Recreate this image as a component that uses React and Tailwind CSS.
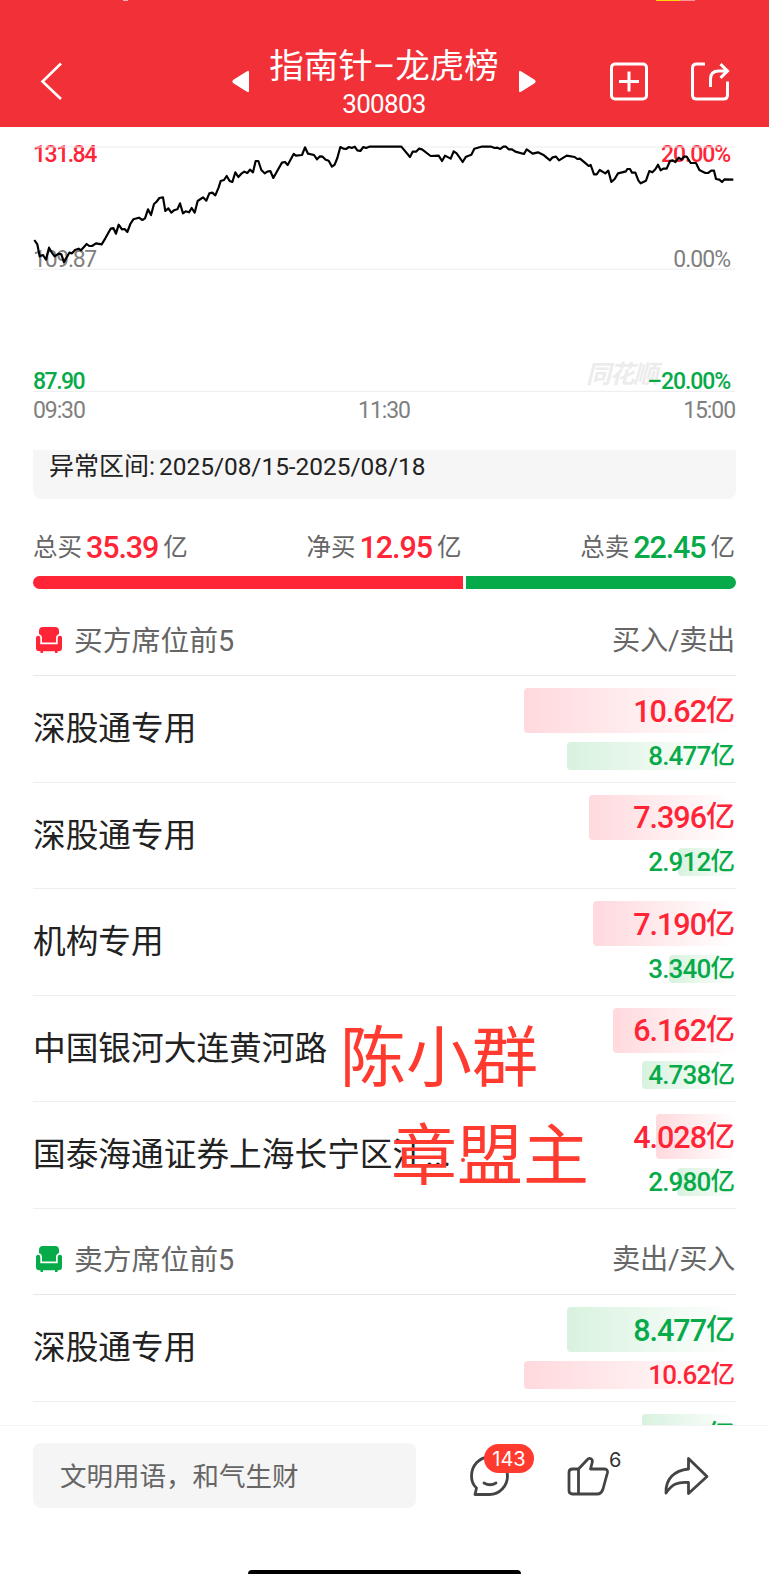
const F = "font-['Roboto','Noto_Sans_CJK_SC',sans-serif]";

const PRICE = "43,330 52,343 59,379 69,375 78,389 87,353 95,367 104,379 116,371 124,373 132,397 148,368 156,370 165,360 176,356 183,361 200,342 208,348 216,348 228,340 245,343 256,325 272,296 280,294 288,311 296,284 306,298 314,297 322,306 331,282 340,268 357,263 367,270 375,265 384,238 393,255 402,222 410,215 418,204 429,202 436,243 445,235 454,248 462,241 472,238 480,220 489,250 497,244 507,247 515,234 524,248 533,213 549,202 559,212 568,190 577,188 586,196 596,172 602,153 612,150 620,138 629,153 637,156 646,127 655,141 664,131 673,125 682,129 690,119 699,127 707,93 715,93 724,120 734,130 742,125 751,123 760,144 775,117 786,98 795,96 803,105 821,72 828,77 846,75 855,52 864,71 882,75 891,88 900,79 908,80 917,89 926,92 936,110 944,104 952,84 961,51 970,56 978,57 987,51 995,54 1004,50 1012,61 1021,63 1030,51 1038,54 1048,50 1144,50 1170,81 1178,65 1188,65 1197,56 1206,58 1232,78 1256,77 1266,93 1275,77 1292,86 1301,64 1310,70 1328,96 1338,80 1354,74 1363,56 1384,50 1414,50 1424,54 1432,53 1441,57 1450,50 1458,50 1466,58 1476,58 1486,65 1512,72 1520,58 1538,71 1554,67 1572,76 1590,91 1598,82 1608,80 1617,91 1640,77 1664,81 1672,87 1680,86 1698,101 1706,108 1712,105 1722,133 1730,133 1739,120 1756,130 1765,122 1774,156 1784,147 1794,130 1818,124 1822,117 1830,117 1836,128 1846,128 1855,151 1862,160 1878,152 1888,123 1897,127 1906,118 1914,104 1922,121 1930,116 1940,116 1950,93 1958,91 1966,96 1976,83 1984,89 1992,80 2000,80 2012,99 2028,99 2038,120 2056,129 2064,129 2074,122 2082,122 2088,147 2098,149 2106,156 2114,148 2140,149";

const BUYERS = [
  { name: "深股通专用", top: "10.62", bottom: "8.477" },
  { name: "深股通专用", top: "7.396", bottom: "2.912" },
  { name: "机构专用", top: "7.190", bottom: "3.340" },
  { name: "中国银河大连黄河路", top: "6.162", bottom: "4.738" },
  { name: "国泰海通证券上海长宁区江...", top: "4.028", bottom: "2.980" },
];

const SELLERS = [
  { name: "深股通专用", top: "8.477", bottom: "10.62" },
  { name: "中国银河大连黄河路", top: "4.738", bottom: "6.162" },
];

function Amount({ value, green, small }) {
  return (
    <div
      className={`flex items-center justify-end rounded-[4px] bg-linear-to-r ${small ? "h-[28px]" : "h-[45px]"} ${
        green ? "from-[#d8f2df] to-white text-[#07aa49]" : "from-[#ffd9dd] to-white text-[#ff2436]"
      }`}
      style={{ width: `${Number(value) * 19.92}px` }}
    >
      <span className={`flex shrink-0 items-center whitespace-nowrap pr-[1px] font-medium ${small ? "text-[26px] leading-[28px] tracking-[-0.8px]" : "pt-[1px] text-[30.500px] leading-[45px] tracking-[-1px]"}`}>
        {value}
        <span className={small ? "text-[24.5px] tracking-normal" : "text-[29px] tracking-normal"}>亿</span>
      </span>
    </div>
  );
}

function SeatRow({ seat, sell }) {
  return (
    <div className="flex h-[106.5px] shrink-0 items-center justify-between border-b border-[#efefef]">
      <span className="whitespace-nowrap pt-[1px] text-[32.700px] leading-[48px] text-[#222]">{seat.name}</span>
      <div className="flex w-0 flex-col items-end gap-[8.5px]">
        <Amount value={seat.top} green={sell} />
        <Amount value={seat.bottom} green={!sell} small />
      </div>
    </div>
  );
}

function SeatIcon({ className }) {
  return (
    <svg className={className} viewBox="0 0 26 26" width="26" height="26" fill="currentColor">
      <path d="M7 0h12q4 0 4 4v3q-3 1-3 4V15.500H6V11q0-3-3-4V4q0-4 4-4z" />
      <path d="M2 8.700Q4.300 8.700 4.300 11.500v5.700h17.400V11.500q0-2.800 2.300-2.800T26 11.500v9.500q0 3.300-3.500 3.300H21.500V26h-2.500v-1.700H7V26H4.500v-1.700H3.500Q0 24.300 0 21v-9.500q0-2.800 2-2.800z" />
    </svg>
  );
}

function SectionHead({ title, right, color }) {
  return (
    <div className="flex h-[72px] shrink-0 items-center justify-between border-b border-[#e8e8e8] pt-[3px] text-[28.800px] leading-[40px] text-[#666]">
      <div className="flex items-center gap-[12px] pl-[3px]">
        <SeatIcon className={`${color} mb-[3px]`} />
        <span>{title}</span>
      </div>
      <span className="pr-[1px] text-[28.200px] tracking-[-0.3px]">{right}</span>
    </div>
  );
}

function Total({ label, value, color }) {
  return (
    <div className="flex items-center text-[24.500px] text-[#666]">
      <span>{label}</span>
      <span className={`ml-[4px] mr-[5px] text-[30.500px] font-medium leading-[30px] tracking-[-1.1px] ${color}`}>{value}</span>
      <span>亿</span>
    </div>
  );
}

function Header() {
  return (
    <header className="relative flex h-[127px] shrink-0 items-start justify-between bg-[#f23037] text-white">
      <svg className="ml-[39px] mt-[62px]" width="26" height="38" viewBox="0 0 26 38" fill="none" stroke="currentColor" strokeWidth="2.600">
        <path d="M22 1.500L3.500 19.500L22 37" />
      </svg>
      <div className="absolute left-[231px] top-[44px] flex w-[306px] items-start justify-between">
        <svg className="mt-[26px]" width="19" height="23" viewBox="0 0 19 23" fill="currentColor">
          <path d="M16 1.300Q18 0 18 2.500v18Q18 23 16 21.700L2 13Q.5 11.500 2 10z" />
        </svg>
        <div className="flex flex-col items-center">
          <h1 className="whitespace-nowrap text-[34.500px] leading-[44px]">指南针–龙虎榜</h1>
          <div className="mt-[1px] text-[26px] leading-[30px] tracking-[-0.7px]">300803</div>
        </div>
        <svg className="mt-[26px]" width="19" height="23" viewBox="0 0 19 23" fill="currentColor">
          <path d="M3 1.300Q1 0 1 2.500v18Q1 23 3 21.700L17 13Q18.500 11.500 17 10z" />
        </svg>
      </div>
      <div className="mr-[39px] mt-[61px] flex gap-[41px]">
        <svg width="40" height="40" viewBox="0 0 40 40" fill="none" stroke="currentColor" strokeWidth="3">
          <rect x="2.500" y="3" width="35" height="35" rx="3.500" />
          <path d="M20 10.500v20M10 20.500h20" />
        </svg>
        <svg width="40" height="40" viewBox="0 0 40 40" fill="none" stroke="currentColor" strokeWidth="3">
          <path d="M15 3H6.500q-4 0-4 4v27q0 4 4 4h27q4 0 4-4V20.500" />
          <path d="M20.500 26V18q0-8 8-8H37M30.500 3.200L37.500 10L30.500 16.800" />
        </svg>
      </div>
      <div className="absolute left-[123px] top-0 h-px w-[5px] bg-white/60" />
      <div className="absolute left-[656px] top-0 flex h-px w-[39px]">
        <span className="w-[24px] bg-[#ffd60a]" />
        <span className="w-[15px] bg-white/50" />
      </div>
    </header>
  );
}

function Chart() {
  return (
    <section className="relative h-[323px] shrink-0 text-[23px] leading-[24px] tracking-[-1.3px]">
      <span className="absolute right-[112px] top-[236px] text-[25px] font-bold italic text-[#ececec]">同花顺</span>
      <span className="absolute left-[33px] top-[16px] font-medium tracking-[-1.5px] text-[#ff2436]">131.84</span>
      <span className="absolute left-[33px] top-[121px] text-[#808080]">109.87</span>
      <span className="absolute left-[33px] top-[243px] font-medium tracking-[-1.5px] text-[#07aa49]">87.90</span>
      <span className="absolute right-[39px] top-[16px] font-medium tracking-[-1.1px] text-[#ff2436]">20.00%</span>
      <span className="absolute right-[39px] top-[121px] tracking-[-1px] text-[#808080]">0.00%</span>
      <span className="absolute right-[39px] top-[243px] font-medium tracking-[-1.1px] text-[#07aa49]">–20.00%</span>
      <svg className="absolute left-[20px] top-[3px]" width="729" height="270" viewBox="0 0 2187 810" fill="none">
        <path d="M40 51H2145M40 417.500H2145M40 784H2145" stroke="#ececec" strokeWidth="3" />
        <polyline points={PRICE} stroke="#000" strokeWidth="6.500" strokeLinejoin="round" />
      </svg>
      <div className="absolute left-[33px] top-[272px] flex w-[702px] justify-between tracking-[-1.1px] text-[#808080]">
        <span>09:30</span>
        <span>11:30</span>
        <span>15:00</span>
      </div>
    </section>
  );
}

function Footer() {
  return (
    <footer className="flex h-[149px] shrink-0 flex-col justify-between border-t border-[#f3f3f3] bg-white">
      <div className="flex items-start pl-[33px] pt-[17px]">
        <div className="flex h-[65px] w-[383px] items-center rounded-[8px] bg-[#f5f5f5] pl-[27px] pt-[2px] text-[26.500px] text-[#666]">文明用语，和气生财</div>
        <div className="relative ml-[52px] mt-[11px] text-[#444]">
          <svg width="44" height="44" viewBox="0 0 44 44" fill="none" stroke="currentColor" strokeWidth="2.800" strokeLinejoin="round" strokeLinecap="round">
            <path d="M7 40.500L8.500 34C5 31 3.500 26.500 3.500 22C3.500 11.500 11.500 3 21.500 3C31.500 3 39.500 11.500 39.500 22C39.500 32 31.500 40.500 21.500 40.500Z" />
            <path d="M16 29q6 3.500 12 0" />
          </svg>
          <span className="absolute left-[16px] top-[-10px] flex h-[29px] w-[50px] items-center justify-center rounded-full bg-[#ff3b30] font-['Inter'] text-[20px] text-white">143</span>
        </div>
        <div className="relative ml-[54px] mt-[12px] text-[#444]">
          <svg width="44" height="44" viewBox="0 0 44 44" fill="none" stroke="currentColor" strokeWidth="2.800" strokeLinejoin="round">
            <path d="M12.500 14L21 5Q22.500 3 24.500 3.500Q27 4.500 26.200 7.500L24.500 14H38Q42 14 41.500 17.500L37 34Q35.500 39 31 39H6.500Q3 39 3 35.500V17.500Q3 14 6.500 14ZM12.500 14V39" />
          </svg>
          <span className="absolute left-[43px] top-[-8px] font-['Inter'] text-[20px] leading-[26px] text-[#333]">6</span>
        </div>
        <svg className="ml-[52px] mt-[12px] text-[#444]" width="48" height="44" viewBox="0 0 48 44" fill="none" stroke="currentColor" strokeWidth="2.800" strokeLinejoin="round">
          <path d="M26.500 3.500L45 21.500L26.500 38.500V27.500C16 26.500 10 29 4 38C3.500 24 12 15.500 26.500 14Z" />
        </svg>
      </div>
      <div className="ml-[248px] h-[4px] w-[273px] rounded-t-[4px] bg-black" />
    </footer>
  );
}

export default function App() {
  return (
    <div className={`flex h-[1574px] w-[769px] flex-col overflow-hidden bg-white ${F}`}>
      <Header />
      <main className="relative flex min-h-0 flex-1 flex-col overflow-hidden">
        <Chart />
        <div className="mx-[33px] flex h-[49px] shrink-0 items-start rounded-b-[8px] bg-[#f6f6f6] pl-[16px] pt-[2px] text-[25px] leading-[30px] text-[#222]">
          <span>异常区间:</span>
          <span className="ml-[4px] text-[24.400px]">2025/08/15-2025/08/18</span>
        </div>
        <div className="ml-[33px] mr-[34px] mt-[31px] flex h-[36px] shrink-0 items-center justify-between">
          <Total label="总买" value="35.39" color="text-[#ff2436]" />
          <Total label="净买" value="12.95" color="text-[#ff2436]" />
          <Total label="总卖" value="22.45" color="text-[#07aa49]" />
        </div>
        <div className="mx-[33px] mt-[10px] flex h-[13px] shrink-0 gap-[3px]">
          <div className="w-[430px] rounded-l-full bg-[#ff2436]" />
          <div className="flex-1 rounded-r-full bg-[#07aa49]" />
        </div>
        <div className="mx-[33px] mt-[15px] flex shrink-0 flex-col">
          <SectionHead title="买方席位前5" right="买入/卖出" color="text-[#ff2436]" />
          {BUYERS.map((s, i) => (
            <SeatRow key={i} seat={s} />
          ))}
        </div>
        <div className="mx-[33px] mt-[14.5px] flex shrink-0 flex-col">
          <SectionHead title="卖方席位前5" right="卖出/买入" color="text-[#07aa49]" />
          {SELLERS.map((s, i) => (
            <SeatRow key={i} seat={s} sell />
          ))}
        </div>
        <div className="absolute left-[340px] top-[892px] whitespace-nowrap text-[66px] leading-[80px] text-[#ff3b30]">陈小群</div>
        <div className="absolute left-[391px] top-[990px] whitespace-nowrap text-[66px] leading-[80px] text-[#ff3b30]">章盟主</div>
        <div className="absolute left-[461px] top-[1031px] size-[4px] rounded-full bg-[#ff3b30]" />
      </main>
      <Footer />
    </div>
  );
}
